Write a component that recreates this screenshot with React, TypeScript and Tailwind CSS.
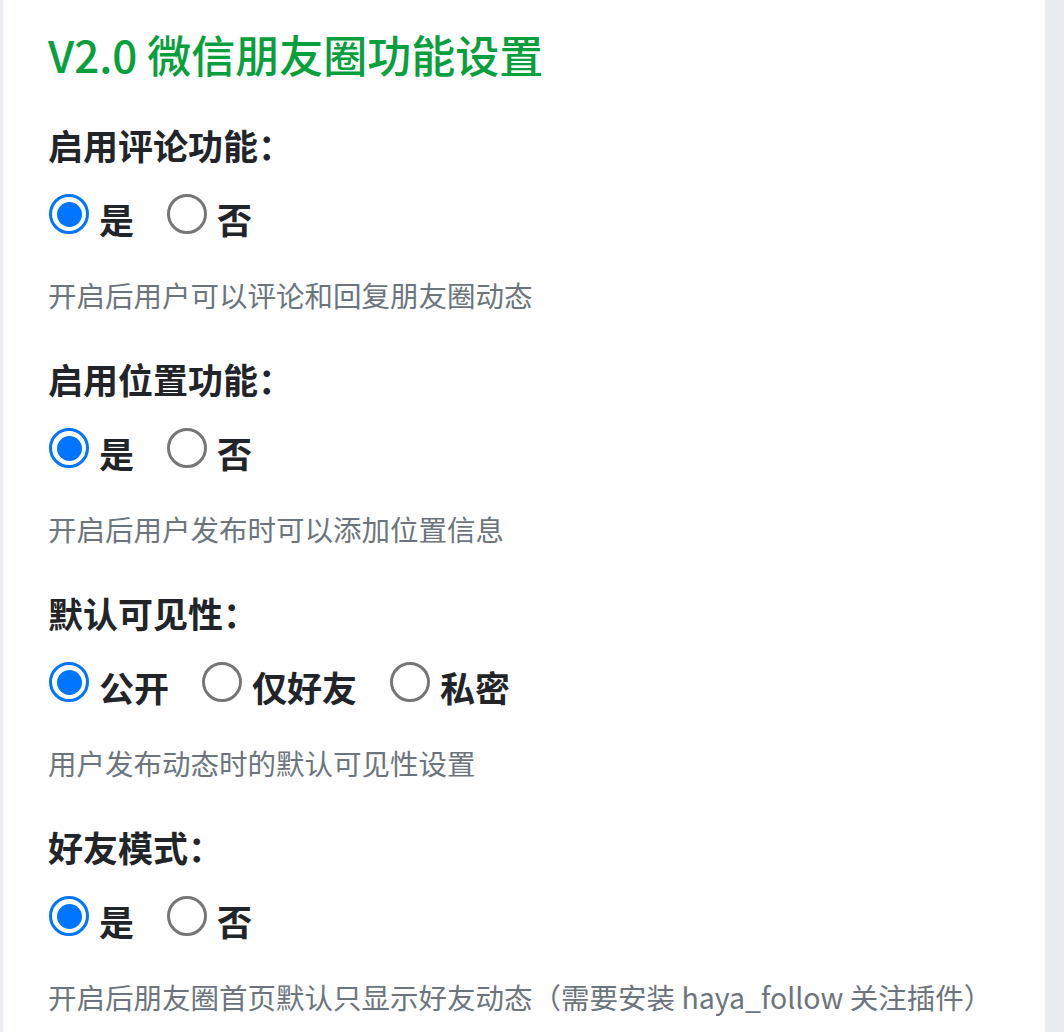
import React from "react";

type Opt = { label: string; checked?: boolean };
type Section = { title: string; options: Opt[]; desc: string };

const sections: Section[] = [
  {
    title: "启用评论功能：",
    options: [{ label: "是", checked: true }, { label: "否" }],
    desc: "开启后用户可以评论和回复朋友圈动态",
  },
  {
    title: "启用位置功能：",
    options: [{ label: "是", checked: true }, { label: "否" }],
    desc: "开启后用户发布时可以添加位置信息",
  },
  {
    title: "默认可见性：",
    options: [{ label: "公开", checked: true }, { label: "仅好友" }, { label: "私密" }],
    desc: "用户发布动态时的默认可见性设置",
  },
  {
    title: "好友模式：",
    options: [{ label: "是", checked: true }, { label: "否" }],
    desc: "开启后朋友圈首页默认只显示好友动态（需要安装 haya_follow 关注插件）",
  },
];

function Radio({ checked }: { checked?: boolean }) {
  if (checked) {
    return (
      <span className="flex h-[40px] w-[40px] shrink-0 items-center justify-center rounded-full border-[3px] border-[#0075ff] bg-white">
        <span className="h-[25px] w-[25px] rounded-full bg-[#0075ff]" />
      </span>
    );
  }
  return <span className="h-[40px] w-[40px] shrink-0 rounded-full border-[3px] border-[#767676] bg-white" />;
}

export default function App() {
  return (
    <div
      className="min-h-screen bg-[#e8ebef] pl-[3px] pr-[19px]"
      style={{ fontFamily: '"Noto Sans CJK SC", "Noto Sans", sans-serif' }}
    >
      <div className="min-h-screen bg-white pb-10 pl-[45px] pt-[28px]">
        <h2 className="text-[44px] font-medium leading-[52px] text-[#08a03c]">V2.0 微信朋友圈功能设置</h2>
        {sections.map((s, i) => (
          <div key={i} className={i === 0 ? "mt-[43px]" : "mt-[44px]"}>
            <div className="text-[35px] font-bold leading-[44px] text-[#212529]">{s.title}</div>
            <div className="mt-[27px] flex items-start pl-[1px]">
              {s.options.map((o, j) => (
                <label key={j} className="mr-[33px] flex items-start">
                  <Radio checked={o.checked} />
                  <span className="ml-[10px] mt-[5px] text-[35px] font-bold leading-[40px] text-[#212529]">
                    {o.label}
                  </span>
                </label>
              ))}
            </div>
            <div className="mt-[38px] text-[28.5px] leading-[36px] text-[#6c757d]">{s.desc}</div>
          </div>
        ))}
      </div>
    </div>
  );
}
